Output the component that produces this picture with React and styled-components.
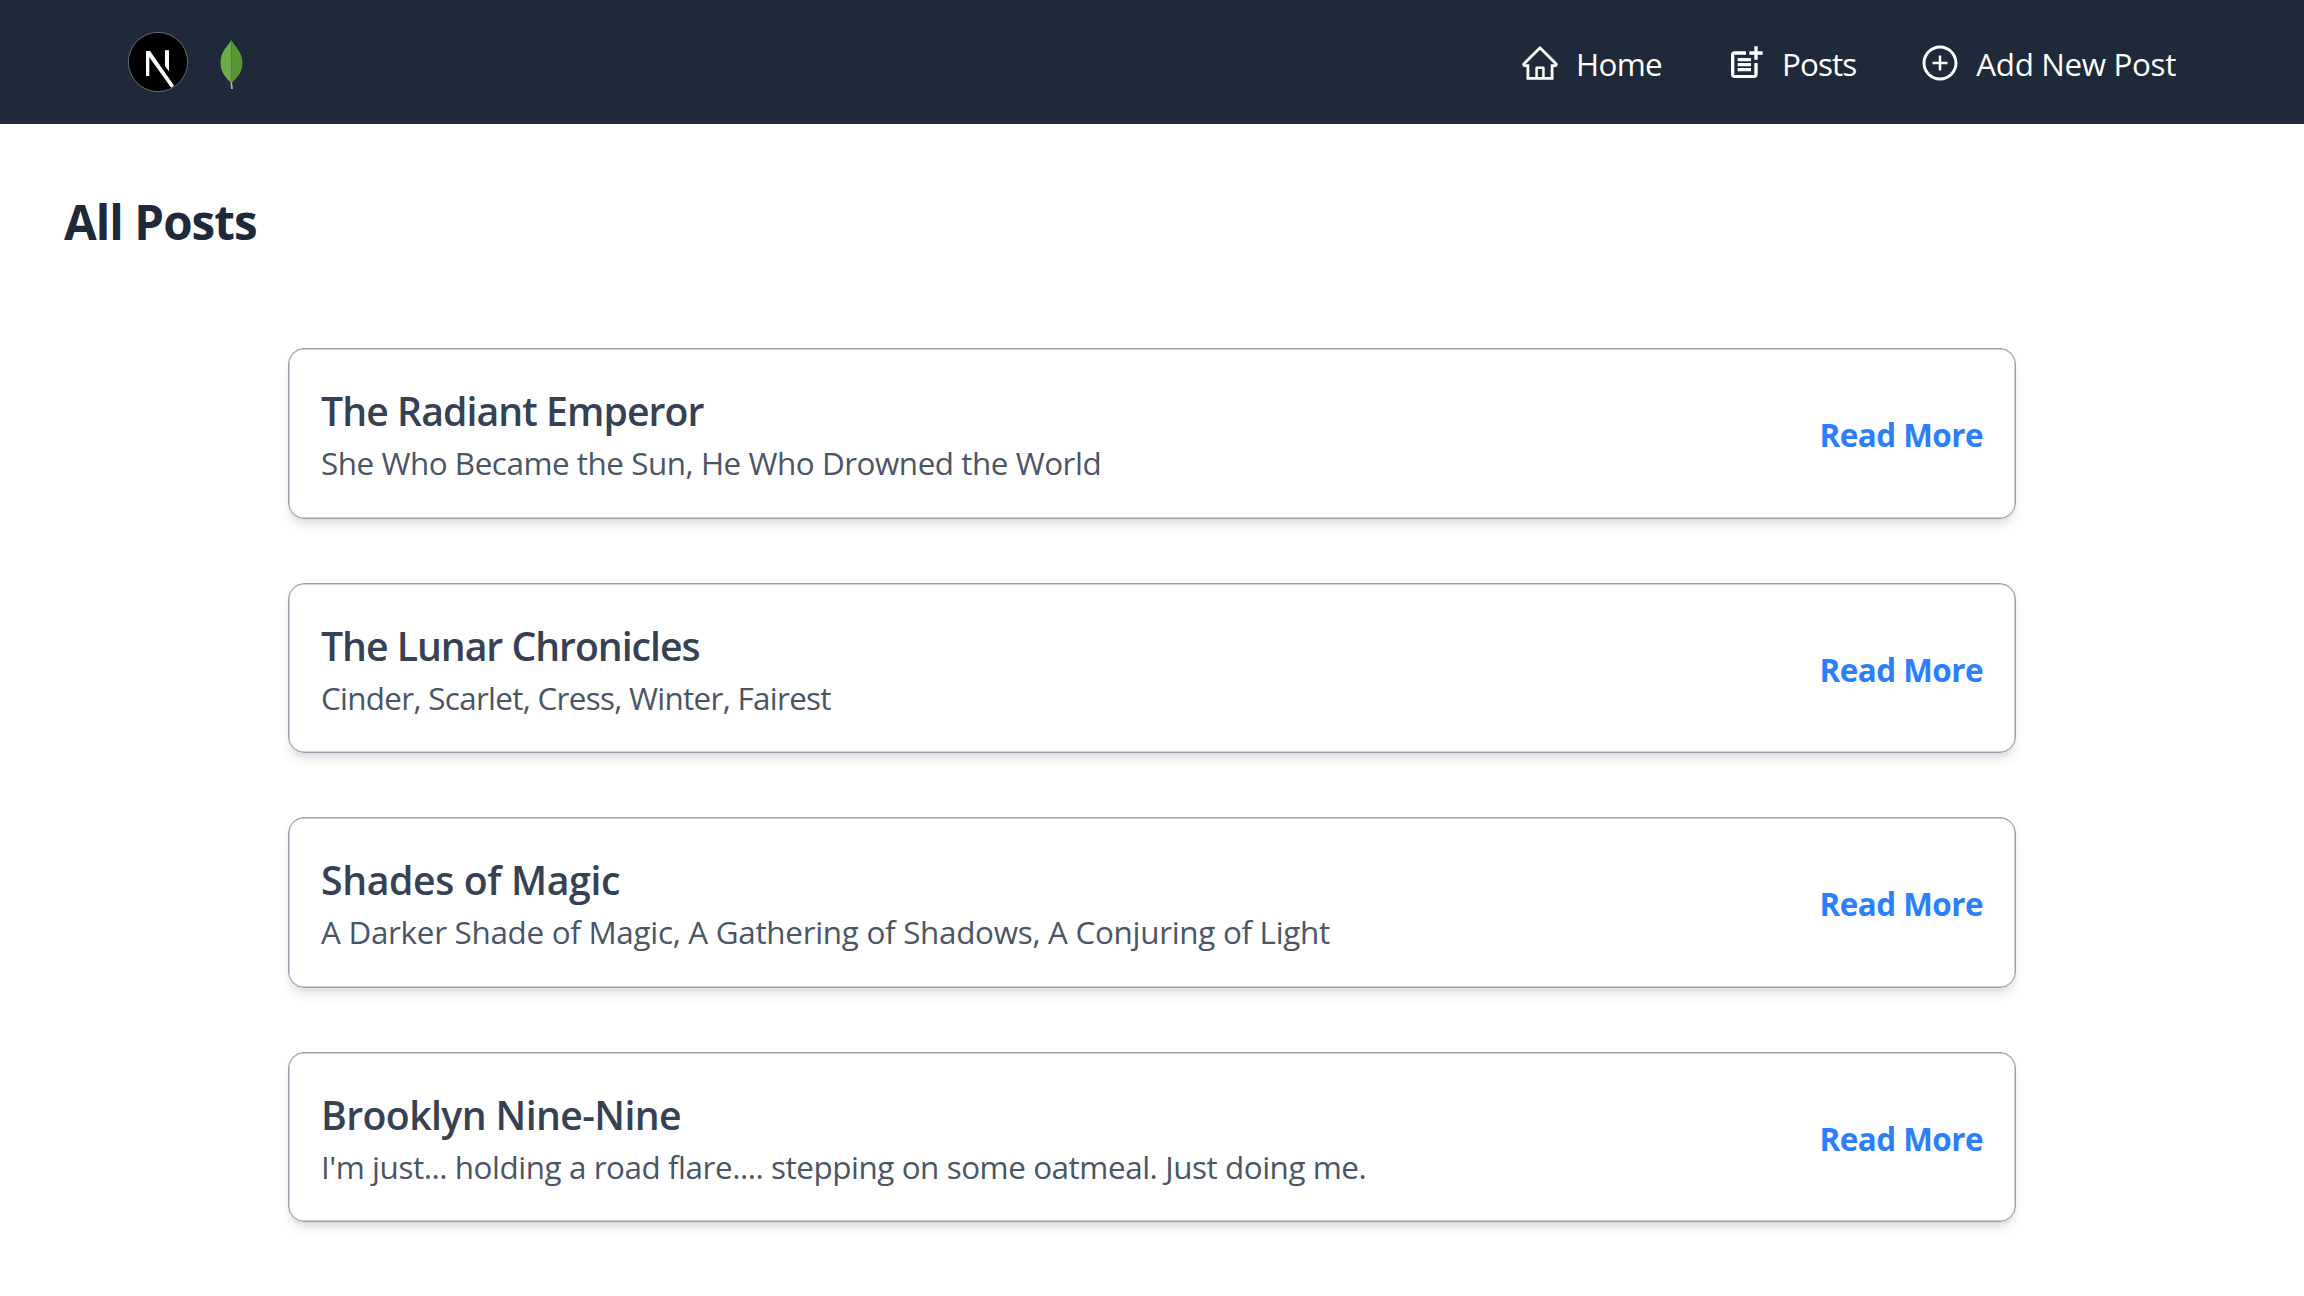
import React from "react";
import styled, { createGlobalStyle } from "styled-components";
import { AiOutlineHome, AiOutlinePlusCircle } from "react-icons/ai";
import { MdOutlinePostAdd } from "react-icons/md";

const GlobalStyle = createGlobalStyle`
  *, *::before, *::after { box-sizing: border-box; }
  body {
    margin: 0;
    background: #fff;
    font-family: "Open Sans", "Noto Sans", sans-serif;
    font-size: 31.4px;
    line-height: 48px;
  }
  h1, h2, p { margin: 0; }
  a { color: inherit; text-decoration: none; }
`;

const Header = styled.header`
  display: flex;
  align-items: center;
  justify-content: space-between;
  height: 124px;
  padding: 0 128px;
  background: #1e2939;
  color: #fff;
`;

const Logos = styled.a`
  display: flex;
  align-items: center;
  gap: 31px;
`;

const Nav = styled.nav`
  display: flex;
  align-items: center;
  gap: 64px;
  padding-top: 2px;
`;

const NavLink = styled.a`
  display: flex;
  align-items: center;
  gap: 16px;
  svg { flex: none; width: 40px; height: 40px; }
`;

const NavLabel = styled.span`
  padding-top: 2px;
  white-space: nowrap;
  letter-spacing: ${(p) => p.$tracking}px;
`;

const Main = styled.main`
  padding: 62px 64px 64px;
`;

const PageTitle = styled.h1`
  color: #1e2939;
  font-size: 47.5px;
  line-height: 72px;
  font-weight: 700;
  letter-spacing: -0.96px;
`;

const PostList = styled.section`
  display: flex;
  flex-direction: column;
  gap: 64px;
  width: 1728px;
  margin: 90px auto 0;
`;

const Card = styled.article`
  display: flex;
  align-items: center;
  justify-content: space-between;
  height: 170.6px;
  padding: 4px 32px 0;
  border: 1px solid #99a1af;
  border-radius: 16px;
  box-shadow: inset 0 0 0 0.5px #99a1af, 0 8px 12px -2px rgb(0 0 0 / 0.1),
    0 4px 8px -4px rgb(0 0 0 / 0.1);
`;

const PostTitle = styled.h2`
  color: #364153;
  font-size: 39.2px;
  line-height: 56px;
  font-weight: 600;
  white-space: nowrap;
  letter-spacing: ${(p) => p.$tracking}px;
`;

const Summary = styled.p`
  color: #4a5565;
  white-space: nowrap;
  letter-spacing: ${(p) => p.$tracking}px;
`;

const ReadMore = styled.a`
  color: #2b7fff;
  font-weight: 700;
  letter-spacing: -0.5px;
`;

const LeafIcon = styled.svg`
  margin-top: 5px;
`;

const NextLogo = () => (
  <svg width="60" height="60" viewBox="0 0 60 60">
    <circle cx="30" cy="30" r="29.6" fill="#000" stroke="#7b818a" strokeWidth="0.8" />
    <path d="M18 19H22L46 53.5L43.2 55.8L21.3 25.3V44H18Z" fill="#fff" />
    <path d="M37 18.3H41V39.6L37 34Z" fill="#fff" />
  </svg>
);

const MongoLeaf = () => (
  <LeafIcon width="24" height="50" viewBox="0 0 24 50">
    <path d="M12.7 41L14 49H12L11.5 41Z" fill="#b8b3b3" />
    <path d="M12.5 0C9 6 1.5 11 1.5 23C1.5 32 7 38.5 12.5 43Z" fill="#6cac48" />
    <path d="M12.5 0C15 6 23.5 11 23.5 23C23.5 33 17 39 12.5 43Z" fill="#599636" />
  </LeafIcon>
);

const links = [
  { label: "Home", Icon: AiOutlineHome, tracking: -0.7 },
  { label: "Posts", Icon: MdOutlinePostAdd, tracking: -0.9 },
  { label: "Add New Post", Icon: AiOutlinePlusCircle, tracking: -0.37 },
];

const posts = [
  {
    title: "The Radiant Emperor",
    text: "She Who Became the Sun, He Who Drowned the World",
    titleTracking: -0.93,
    textTracking: -0.46,
  },
  {
    title: "The Lunar Chronicles",
    text: "Cinder, Scarlet, Cress, Winter, Fairest",
    titleTracking: -1.03,
    textTracking: -0.7,
  },
  {
    title: "Shades of Magic",
    text: "A Darker Shade of Magic, A Gathering of Shadows, A Conjuring of Light",
    titleTracking: -0.37,
    textTracking: -0.29,
  },
  {
    title: "Brooklyn Nine-Nine",
    text: "I'm just... holding a road flare.... stepping on some oatmeal. Just doing me.",
    titleTracking: -0.6,
    textTracking: -0.44,
  },
];

export default function App() {
  return (
    <>
      <GlobalStyle />
      <Header>
        <Logos>
          <NextLogo />
          <MongoLeaf />
        </Logos>
        <Nav>
          {links.map(({ label, Icon, tracking }) => (
            <NavLink key={label}>
              <Icon />
              <NavLabel $tracking={tracking}>{label}</NavLabel>
            </NavLink>
          ))}
        </Nav>
      </Header>
      <Main>
        <PageTitle>All Posts</PageTitle>
        <PostList>
          {posts.map((post) => (
            <Card key={post.title}>
              <div>
                <PostTitle $tracking={post.titleTracking}>{post.title}</PostTitle>
                <Summary $tracking={post.textTracking}>{post.text}</Summary>
              </div>
              <ReadMore>Read More</ReadMore>
            </Card>
          ))}
        </PostList>
      </Main>
    </>
  );
}
